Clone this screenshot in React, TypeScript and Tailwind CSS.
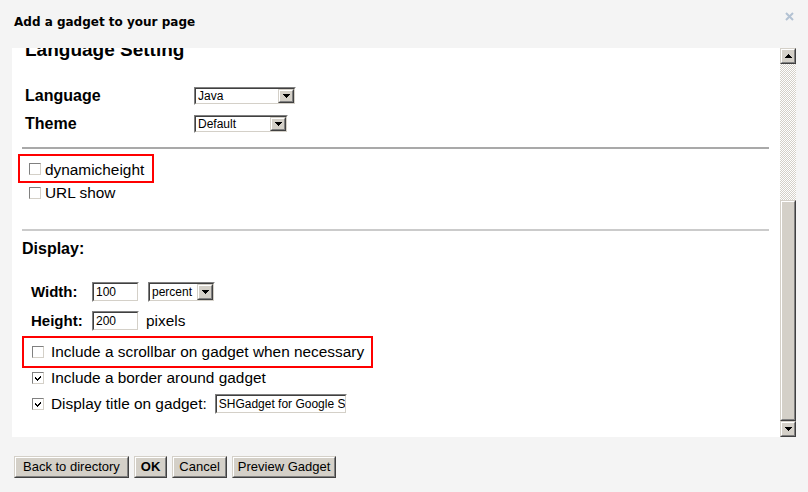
import React from "react";

function Check({ checked }: { checked?: boolean }) {
  return (
    <span className="flex h-[12px] w-[12px] shrink-0 items-center justify-center border border-t-[#808080] border-l-[#808080] border-b-[#d4d0c8] border-r-[#d4d0c8] bg-white">
      {checked && (
        <svg width="8" height="8" viewBox="0 0 8 8" shapeRendering="crispEdges">
          <path d="M1 3 L3 5 L7 1 L7 3 L3 7 L1 5 Z" fill="#000" />
        </svg>
      )}
    </span>
  );
}

function Inset({ className, children }: { className: string; children?: React.ReactNode }) {
  return (
    <div className={"shrink-0 border border-t-[#808080] border-l-[#808080] border-b-white border-r-white " + className}>
      <div className="flex h-full w-full items-center overflow-hidden border border-t-[#404040] border-l-[#404040] border-b-[#d4d0c8] border-r-[#d4d0c8] bg-white">
        {children}
      </div>
    </div>
  );
}

function Raised({ className, children }: { className: string; children?: React.ReactNode }) {
  return (
    <div className={"border border-t-[#d4d0c8] border-l-[#d4d0c8] border-b-[#404040] border-r-[#404040] bg-[#d4d0c8] " + className}>
      <div className="flex h-full w-full items-center justify-center border border-t-white border-l-white border-b-[#808080] border-r-[#808080]">
        {children}
      </div>
    </div>
  );
}

function Tri({ up }: { up?: boolean }) {
  return (
    <svg width="7" height="4" viewBox="0 0 7 4" shapeRendering="crispEdges">
      {up ? (
        <path d="M3 0 H4 V1 H5 V2 H6 V3 H7 V4 H0 V3 H1 V2 H2 V1 H3 Z" fill="#000" />
      ) : (
        <path d="M0 0 H7 V1 H6 V2 H5 V3 H4 V4 H3 V3 H2 V2 H1 V1 H0 Z" fill="#000" />
      )}
    </svg>
  );
}

function Select({ value, className }: { value: string; className: string }) {
  return (
    <Inset className={className}>
      <span className="flex-1 pl-[2px] text-[12px] leading-[14px] text-black">{value}</span>
      <Raised className="h-full w-[16px]">
        <Tri />
      </Raised>
    </Inset>
  );
}

export default function App() {
  return (
    <div className="flex h-[492px] w-[808px] flex-col bg-[#f4f4f4] font-['Liberation_Sans',Arial,sans-serif] text-black">
      {/* header */}
      <div className="flex h-[48px] shrink-0 items-start justify-between pl-[14px] pr-[14px]">
        <div className="pt-[14px] font-['DejaVu_Sans',Verdana,sans-serif] text-[12px] font-bold leading-[16px] text-black">
          Add a gadget to your page
        </div>
        <svg className="mt-[12px]" width="9" height="9" viewBox="0 0 9 9">
          <path d="M1 1 L8 8 M8 1 L1 8" stroke="#b3c2d3" strokeWidth="2" />
        </svg>
      </div>

      {/* main panel */}
      <div className="ml-[12px] flex h-[389px] w-[784px] shrink-0">
        <div className="h-full w-[768px] overflow-hidden bg-white">
          <div className="flex flex-col pl-[10px] pr-[11px]">
            <div className="-mt-[9px] ml-[3px] text-[19px] font-bold leading-[22px]">Language Setting</div>

            <div className="ml-[3px] mt-[23px] flex h-[24px] items-center">
              <span className="w-[169px] text-[16px] font-bold leading-[24px]">Language</span>
              <Select value="Java" className="h-[18px] w-[102px]" />
            </div>
            <div className="ml-[3px] mt-[4px] flex h-[24px] items-center">
              <span className="w-[169px] text-[16px] font-bold leading-[24px]">Theme</span>
              <Select value="Default" className="h-[18px] w-[94px]" />
            </div>

            <div className="mt-[11px] h-[2px] bg-[#a9a9a9]" />

            <div className="-ml-[4px] mt-[5px] flex h-[29px] w-fit items-center border-2 border-[#ff0000] pl-[9px] pr-[8px]">
              <Check />
              <span className="ml-[4px] pt-[2px] text-[15.4px] leading-[21px]">dynamicheight</span>
            </div>
            <div className="ml-[7px] flex h-[20px] items-center">
              <Check />
              <span className="ml-[4px] text-[15.4px] leading-[20px]">URL show</span>
            </div>

            <div className="mt-[26px] h-[2px] bg-[#cbcbcb]" />

            <div className="mt-[8px] text-[16px] font-bold leading-[20px]">Display:</div>

            <div className="ml-[9px] mt-[23px] flex h-[20px] items-center">
              <span className="w-[61px] text-[15px] font-bold leading-[20px]">Width:</span>
              <Inset className="h-[20px] w-[47px]">
                <span className="pl-[2px] text-[12px] leading-[14px]">100</span>
              </Inset>
              <Select value="percent" className="ml-[9px] h-[20px] w-[67px]" />
            </div>
            <div className="ml-[9px] mt-[9px] flex h-[20px] items-center">
              <span className="w-[61px] text-[15px] font-bold leading-[20px]">Height:</span>
              <Inset className="h-[20px] w-[47px]">
                <span className="pl-[2px] text-[12px] leading-[14px]">200</span>
              </Inset>
              <span className="ml-[7px] text-[15.4px] leading-[20px]">pixels</span>
            </div>

            <div className="mt-[5px] flex h-[32px] w-fit items-center border-2 border-[#ff0000] pl-[8px] pr-[7px]">
              <Check />
              <span className="ml-[7px] text-[15.4px] leading-[28px]">Include a scrollbar on gadget when necessary</span>
            </div>
            <div className="ml-[10px] flex h-[20px] items-center">
              <Check checked />
              <span className="ml-[7px] text-[15.4px] leading-[20px]">Include a border around gadget</span>
            </div>
            <div className="ml-[10px] mt-[6px] flex h-[20px] items-center">
              <Check checked />
              <span className="ml-[7px] text-[15.4px] leading-[20px]">Display title on gadget:</span>
              <Inset className="ml-[8px] h-[20px] w-[132px]">
                <span className="whitespace-nowrap pl-[2px] text-[12px] leading-[14px]">SHGadget for Google S</span>
              </Inset>
            </div>
          </div>
        </div>

        {/* scrollbar */}
        <div className="flex h-full w-[16px] flex-col">
          <Raised className="h-[16px] w-[16px] shrink-0">
            <Tri up />
          </Raised>
          <div className="flex-1 bg-[repeating-conic-gradient(#d4d0c8_0_25%,#ffffff_0_50%)] bg-[length:2px_2px]" />
          <Raised className="h-[221px] w-[16px] shrink-0" />
          <Raised className="h-[16px] w-[16px] shrink-0">
            <Tri />
          </Raised>
        </div>
      </div>

      {/* footer */}
      <div className="ml-[14px] mt-[19px] flex gap-[5px]">
        <Raised className="h-[22px]">
          <span className="px-[7px] text-[13px] leading-[18px]">Back to directory</span>
        </Raised>
        <Raised className="h-[22px]">
          <span className="px-[5px] text-[13px] font-bold leading-[18px]">OK</span>
        </Raised>
        <Raised className="h-[22px]">
          <span className="px-[5px] text-[13px] leading-[18px]">Cancel</span>
        </Raised>
        <Raised className="h-[22px]">
          <span className="px-[4px] text-[13px] leading-[18px]">Preview Gadget</span>
        </Raised>
      </div>
    </div>
  );
}
